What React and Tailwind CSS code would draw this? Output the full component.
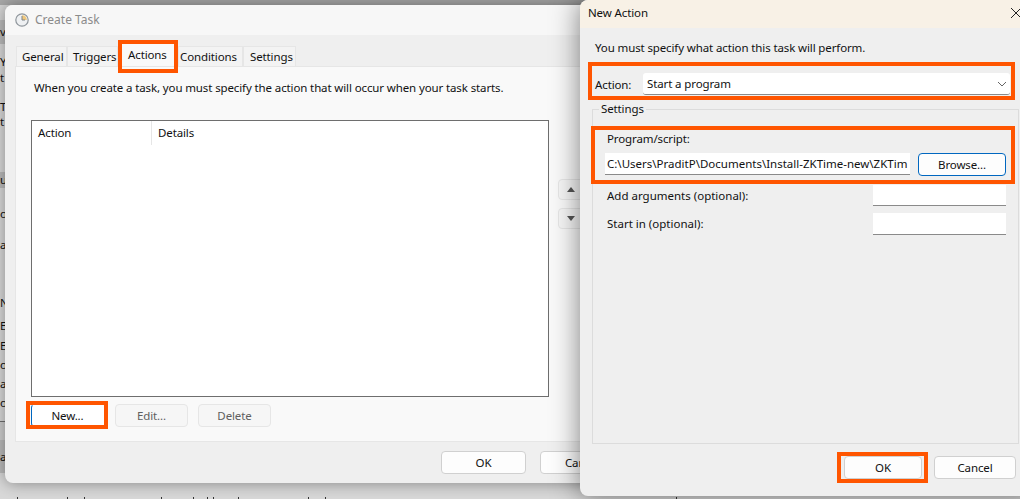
import React from 'react';

// what is left visible of the app behind the dialogs, top to bottom
const strip = [
  { h: 5, bg: 'bg-[#a8a8a8]' },
  { h: 15, bg: 'bg-[#d6d6d6]' },
  { h: 24, bg: 'bg-[#bcbcbc]', t: 'v' },
  { h: 10, bg: 'bg-[#dadada]' },
  { h: 16, bg: 'bg-[#dadada]', t: 'Y' },
  { h: 15, bg: 'bg-[#dadada]', t: 't' },
  { h: 14, bg: 'bg-[#dadada]' },
  { h: 15, bg: 'bg-[#dadada]', t: 'T' },
  { h: 16, bg: 'bg-[#dadada]', t: 't' },
  { h: 42, bg: 'bg-[#dadada]' },
  { h: 16, bg: 'bg-[#bcbcbc]', t: 'u' },
  { h: 18, bg: 'bg-[#dadada]' },
  { h: 16, bg: 'bg-[#dadada]', t: 'o' },
  { h: 15, bg: 'bg-[#dadada]' },
  { h: 16, bg: 'bg-[#dadada]', t: 'a' },
  { h: 42, bg: 'bg-[#dadada]' },
  { h: 16, bg: 'bg-[#dadada]', t: 'Na' },
  { h: 8, bg: 'bg-[#dadada]' },
  { h: 14, bg: 'bg-[#dadada]', t: 'E' },
  { h: 6, bg: 'bg-[#dadada]' },
  { h: 14, bg: 'bg-[#dadada]', t: 'E' },
  { h: 5, bg: 'bg-[#dadada]' },
  { h: 14, bg: 'bg-[#dadada]', t: 'o' },
  { h: 5, bg: 'bg-[#dadada]' },
  { h: 14, bg: 'bg-[#dadada]', t: 'a' },
  { h: 5, bg: 'bg-[#dadada]' },
  { h: 14, bg: 'bg-[#dadada]', t: 'o' },
  { h: 11, bg: 'bg-[#dadada]', t: '_' },
  { h: 1, bg: 'bg-[#707070]' },
  { h: 18, bg: 'bg-[#cfcfcf]' },
  { h: 33, bg: 'bg-[#bcbcbc]', t: 'as' },
];

const tabs = [
  { label: 'General', w: 'w-[51px]', pl: 'pl-[5px]' },
  { label: 'Triggers', w: 'w-[51px]', pl: 'pl-[5px]' },
  { label: 'Actions', w: 'w-[60px]', pl: 'pl-[10px]', active: true },
  { label: 'Conditions', w: 'w-[65px]', pl: 'pl-[1px]' },
  { label: 'Settings', w: 'w-[53px]', pl: 'pl-[6px]' },
];

// tops of the line of text that the crop cuts off under the dialogs
const cutTicks = [17, 67, 84, 161, 193, 207, 213, 238, 308, 325, 676];

function Btn({ children, className = '', look = 'border-[#d0d0d0] bg-[#fdfdfd] text-[#111]' }) {
  return (
    <div className={`flex shrink-0 items-center justify-center rounded-[4px] border ${look} ${className}`}>
      {children}
    </div>
  );
}

const quiet = 'border-[#e6e6e6] bg-[#f6f6f6] text-[#5f5f5f]';

function ClockIcon() {
  return (
    <svg width="14" height="14" viewBox="0 0 14 14">
      <circle cx="7" cy="7" r="6.2" fill="#eef0f2" stroke="#8f969c" strokeWidth="1.2" />
      <path d="M7 7V2.2A4.8 4.8 0 0 1 11.8 7Z" fill="#efc77c" />
      <path d="M7 3v4h3" fill="none" stroke="#7c8388" strokeWidth="1" />
    </svg>
  );
}

function Mark({ className }) {
  return <div className={`absolute border-4 border-[#ff5500] ${className}`} />;
}

function CreateTask() {
  return (
    <div className="absolute left-[5px] top-[5px] flex h-[478px] w-[600px] flex-col rounded-lg bg-[#efefef] shadow-[0_0_16px_rgba(0,0,0,0.4)]">
      <div className="flex h-[30px] items-center gap-[6px] rounded-t-lg bg-[#f7f7f7] pl-[10px] text-[12px] tracking-normal text-[#8b8b8b]">
        <ClockIcon />
        <span>Create Task</span>
      </div>
      <div className="flex h-[31px] items-end pl-[11px]">
        {tabs.map((tab) => (
          <div
            key={tab.label}
            className={`flex items-center ${tab.w} ${tab.pl} ${tab.active ? 'h-[26px] bg-[#f9f9f9] pt-[4px]' : 'h-[20px] border border-b-0 border-[#e6e6e6] bg-[#f3f3f3]'}`}
          >
            {tab.label}
          </div>
        ))}
      </div>
      <div className="ml-[10px] flex h-[376px] flex-col border border-[#e6e6e6] bg-[#f9f9f9] pl-[15px]">
        <p className="mt-[13px] pl-[3px] leading-[16px] text-[#111]">
          When you create a task, you must specify the action that will occur when your task starts.
        </p>
        <div className="mt-[24px] flex">
          <div className="h-[277px] w-[518px] shrink-0 border border-[#6e6e6e] bg-white">
            <div className="flex h-[24px] items-center">
              <div className="flex h-full w-[120px] items-center border-r border-[#e6e6e6] pl-[6px]">Action</div>
              <div className="pl-[6px]">Details</div>
            </div>
          </div>
          <div className="ml-[9px] mt-[59px] flex flex-col gap-[8px]">
            <Btn className="h-[21px] w-[40px]" look={quiet}>
              <svg className="mr-[14px]" width="8" height="5" viewBox="0 0 8 5"><path d="M4 0 8 5H0Z" fill="#555" /></svg>
            </Btn>
            <Btn className="h-[21px] w-[40px]" look={quiet}>
              <svg className="mr-[14px]" width="8" height="5" viewBox="0 0 8 5"><path d="M0 0H8L4 5Z" fill="#555" /></svg>
            </Btn>
          </div>
        </div>
        <div className="mt-[7px] flex gap-[10px]">
          <Btn className="mr-px h-[23px] w-[73px] border-l-[#0067c0]" look="border-white bg-white text-[#111]">New...</Btn>
          <Btn className="h-[23px] w-[73px]" look={quiet}>Edit...</Btn>
          <Btn className="h-[23px] w-[73px]" look={quiet}>Delete</Btn>
        </div>
      </div>
      <div className="mt-[9px] flex gap-[14px] pl-[436px]">
        <Btn className="h-[23px] w-[85px]">OK</Btn>
        <Btn className="h-[23px] w-[85px]">Cancel</Btn>
      </div>
    </div>
  );
}

function NewAction() {
  return (
    <div className="absolute left-[580px] top-0 flex h-[496px] w-[460px] flex-col rounded-lg bg-[#efefef] text-[#111] shadow-[0_0_28px_rgba(0,0,0,0.5)]">
      <div className="flex h-[28px] items-center justify-between rounded-t-lg bg-[#f8f1e6] pb-[2px] pl-[8px] pr-[20px]">
        <span>New Action</span>
        <svg className="-mr-[1px]" width="10" height="10" viewBox="0 0 10 10"><path d="M0 0 10 10M10 0 0 10" stroke="#222" strokeWidth="1" /></svg>
      </div>
      <p className="ml-[15px] mt-[12px] leading-[16px]">You must specify what action this task will perform.</p>
      <div className="ml-[15px] mt-[17px] flex items-center">
        <span className="w-[48px] pt-[2px]">Action:</span>
        <div className="flex h-[22px] w-[367px] items-center justify-between rounded-[3px] border-b border-[#8a8a8a] bg-white pl-[4px] pr-[3px]">
          <span>Start a program</span>
          <svg width="10" height="6" viewBox="0 0 10 6"><path d="M1 1 5 5 9 1" fill="none" stroke="#666" strokeWidth="1" /></svg>
        </div>
      </div>
      <div className="relative ml-[12px] mt-[14px] h-[335px] w-[427px] border border-[#dcdcdc]">
        <span className="absolute -top-[9px] left-[6px] bg-[#efefef] px-[2px] leading-[16px]">Settings</span>
        <div className="pl-[12px] pt-[21px]">
          <div className="pl-[2px] leading-[16px]">Program/script:</div>
          <div className="mt-[6px] flex items-start gap-[8px]">
            <div className="flex h-[22px] w-[305px] items-center overflow-hidden whitespace-nowrap border-b border-[#8a8a8a] bg-white pl-[2px] tracking-normal">
              C:\Users\PraditP\Documents\Install-ZKTime-new\ZKTim
            </div>
            <Btn className="h-[23px] w-[88px]" look="border-[#0067c0] bg-[#fdfdfd] text-[#111]">Browse...</Btn>
          </div>
          <div className="mt-[9px] flex h-[21px] w-[401px] items-center justify-between">
            <span className="pl-[2px] tracking-normal">Add arguments (optional):</span>
            <div className="h-full w-[133px] border-b border-[#8a8a8a] bg-white" />
          </div>
          <div className="mt-[7px] flex h-[22px] w-[401px] items-center justify-between">
            <span className="pl-[2px] tracking-normal">Start in (optional):</span>
            <div className="h-full w-[133px] border-b border-[#8a8a8a] bg-white" />
          </div>
        </div>
      </div>
      <div className="mt-[12px] flex gap-[12px] pl-[264px]">
        <Btn className="h-[23px] w-[78px]">OK</Btn>
        <Btn className="h-[23px] w-[82px]">Cancel</Btn>
      </div>
    </div>
  );
}

export default function App() {
  return (
    <div className="relative h-[499px] w-[1020px] overflow-hidden bg-[#d8d8d8] font-['Noto_Sans',sans-serif] text-[11.5px] tracking-[-0.12px] text-[#111]">
      <div className="flex w-[5px] flex-col overflow-hidden">
        {strip.map((row, i) => (
          <div key={i} style={{ height: row.h }} className={`flex items-center overflow-hidden whitespace-nowrap leading-none ${row.bg}`}>
            {row.t}
          </div>
        ))}
      </div>
      <div className="absolute left-[5px] right-0 top-0 h-[5px] bg-[#a8a8a8]" />
      <svg className="absolute left-0 top-[497px]" width="1020" height="2">
        {cutTicks.map((x) => (
          <rect key={x} x={x} y="0" width="1" height="2" fill="#333" />
        ))}
      </svg>
      <CreateTask />
      <NewAction />
      <Mark className="left-[118px] top-[40px] h-[33px] w-[60px]" />
      <Mark className="left-[26px] top-[401px] h-[28px] w-[82px]" />
      <Mark className="left-[588px] top-[62px] h-[38px] w-[427px]" />
      <Mark className="left-[591px] top-[126px] h-[58px] w-[424px]" />
      <Mark className="left-[837px] top-[452px] h-[31px] w-[91px]" />
    </div>
  );
}
